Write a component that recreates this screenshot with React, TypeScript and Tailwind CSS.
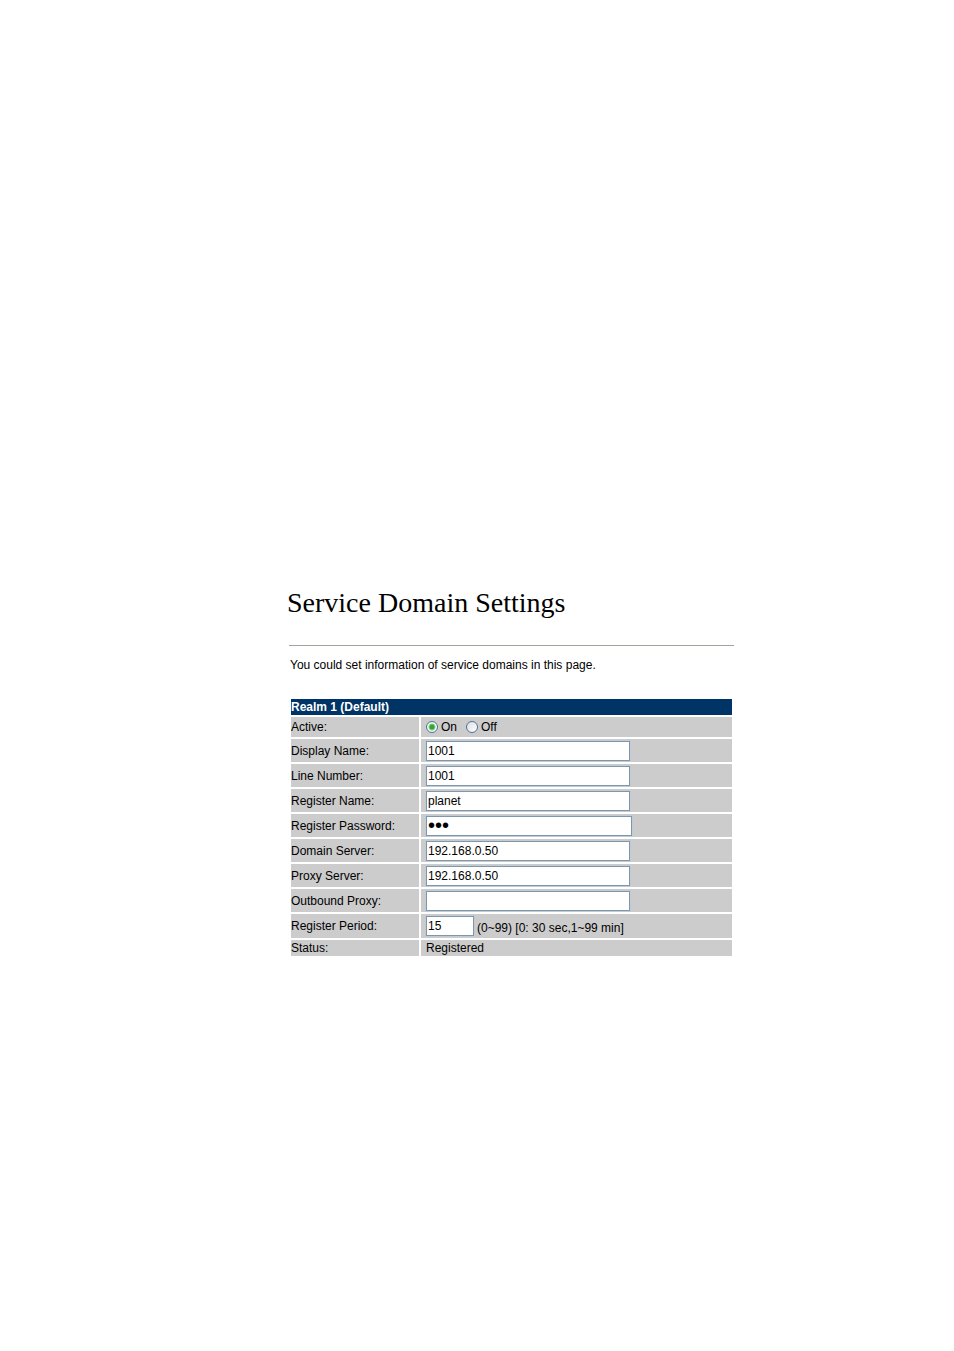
import { useState } from "react";

type Field = {
  id: string;
  label: string;
  value: string;
  type?: "text" | "password";
};

const fields: Field[] = [
  { id: "displayName", label: "Display Name:", value: "1001" },
  { id: "lineNumber", label: "Line Number:", value: "1001" },
  { id: "registerName", label: "Register Name:", value: "planet" },
  {
    id: "registerPassword",
    label: "Register Password:",
    value: "abc",
    type: "password",
  },
  { id: "domainServer", label: "Domain Server:", value: "192.168.0.50" },
  { id: "proxyServer", label: "Proxy Server:", value: "192.168.0.50" },
  { id: "outboundProxy", label: "Outbound Proxy:", value: "" },
];

const labelCell = "w-32 bg-[#cccccc] p-0 text-left align-middle font-normal";
const valueCell = "bg-[#cccccc] py-0 pl-[5px] pr-0 align-middle";
const inputBase =
  "block h-5 rounded-none border border-[#7f96ab] bg-white px-px leading-4 shadow-[0_0_0_1px_#c3cbd2] outline-none";

function RealmRadio({
  label,
  checked,
  onSelect,
}: {
  label: string;
  checked: boolean;
  onSelect: () => void;
}) {
  return (
    <label className="flex items-center gap-[3px]">
      <input
        type="radio"
        name="active"
        checked={checked}
        onChange={onSelect}
        className="size-3 appearance-none rounded-full border border-[#4f7396] bg-[linear-gradient(135deg,#dcdfe0,#ffffff)] checked:bg-[radial-gradient(circle,#2fa82f_0_2px,#f4f8f4_4px)]"
      />
      {label}
    </label>
  );
}

export default function App() {
  const [active, setActive] = useState(true);

  return (
    <main className="bg-white pt-[587px] pr-[220px] pb-16 pl-[289px] font-['Liberation_Sans',Arial,sans-serif] text-[12px] leading-4 text-black">
      <h1 className="-ml-[2px] font-['Liberation_Serif','Times_New_Roman',serif] text-[28px] leading-8 whitespace-nowrap">
        Service Domain Settings
      </h1>
      <hr className="mt-[26px] border-t border-[#a5a399]" />
      <p className="mt-[11px] pl-px">
        You could set information of service domains in this page.
      </p>

      <table className="mt-6 w-full border-separate border-spacing-[2px]">
        <thead>
          <tr className="h-4">
            <th
              colSpan={2}
              className="bg-[#003366] p-0 text-left font-bold text-white"
            >
              Realm 1 (Default)
            </th>
          </tr>
        </thead>
        <tbody>
          <tr className="h-5">
            <th scope="row" className={labelCell}>
              Active:
            </th>
            <td className={valueCell}>
              <div className="flex gap-[9px]">
                <RealmRadio
                  label="On"
                  checked={active}
                  onSelect={() => setActive(true)}
                />
                <RealmRadio
                  label="Off"
                  checked={!active}
                  onSelect={() => setActive(false)}
                />
              </div>
            </td>
          </tr>
          {fields.map((field) => (
            <tr key={field.id} className="h-[23px]">
              <th scope="row" className={labelCell}>
                <label htmlFor={field.id}>{field.label}</label>
              </th>
              <td className={valueCell}>
                <input
                  id={field.id}
                  type={field.type ?? "text"}
                  defaultValue={field.value}
                  className={`${inputBase} ${
                    field.type === "password"
                      ? "w-[206px] text-[20px]"
                      : "w-[204px] text-[12px]"
                  }`}
                />
              </td>
            </tr>
          ))}
          <tr className="h-6">
            <th scope="row" className={labelCell}>
              <label htmlFor="registerPeriod">Register Period:</label>
            </th>
            <td className={valueCell}>
              <div className="flex items-end gap-[3px]">
                <input
                  id="registerPeriod"
                  type="text"
                  defaultValue="15"
                  className={`${inputBase} w-12 text-[12px]`}
                />
                <span>(0~99) [0: 30 sec,1~99 min]</span>
              </div>
            </td>
          </tr>
          <tr className="h-4">
            <th scope="row" className={labelCell}>
              Status:
            </th>
            <td className={valueCell}>Registered</td>
          </tr>
        </tbody>
      </table>
    </main>
  );
}
